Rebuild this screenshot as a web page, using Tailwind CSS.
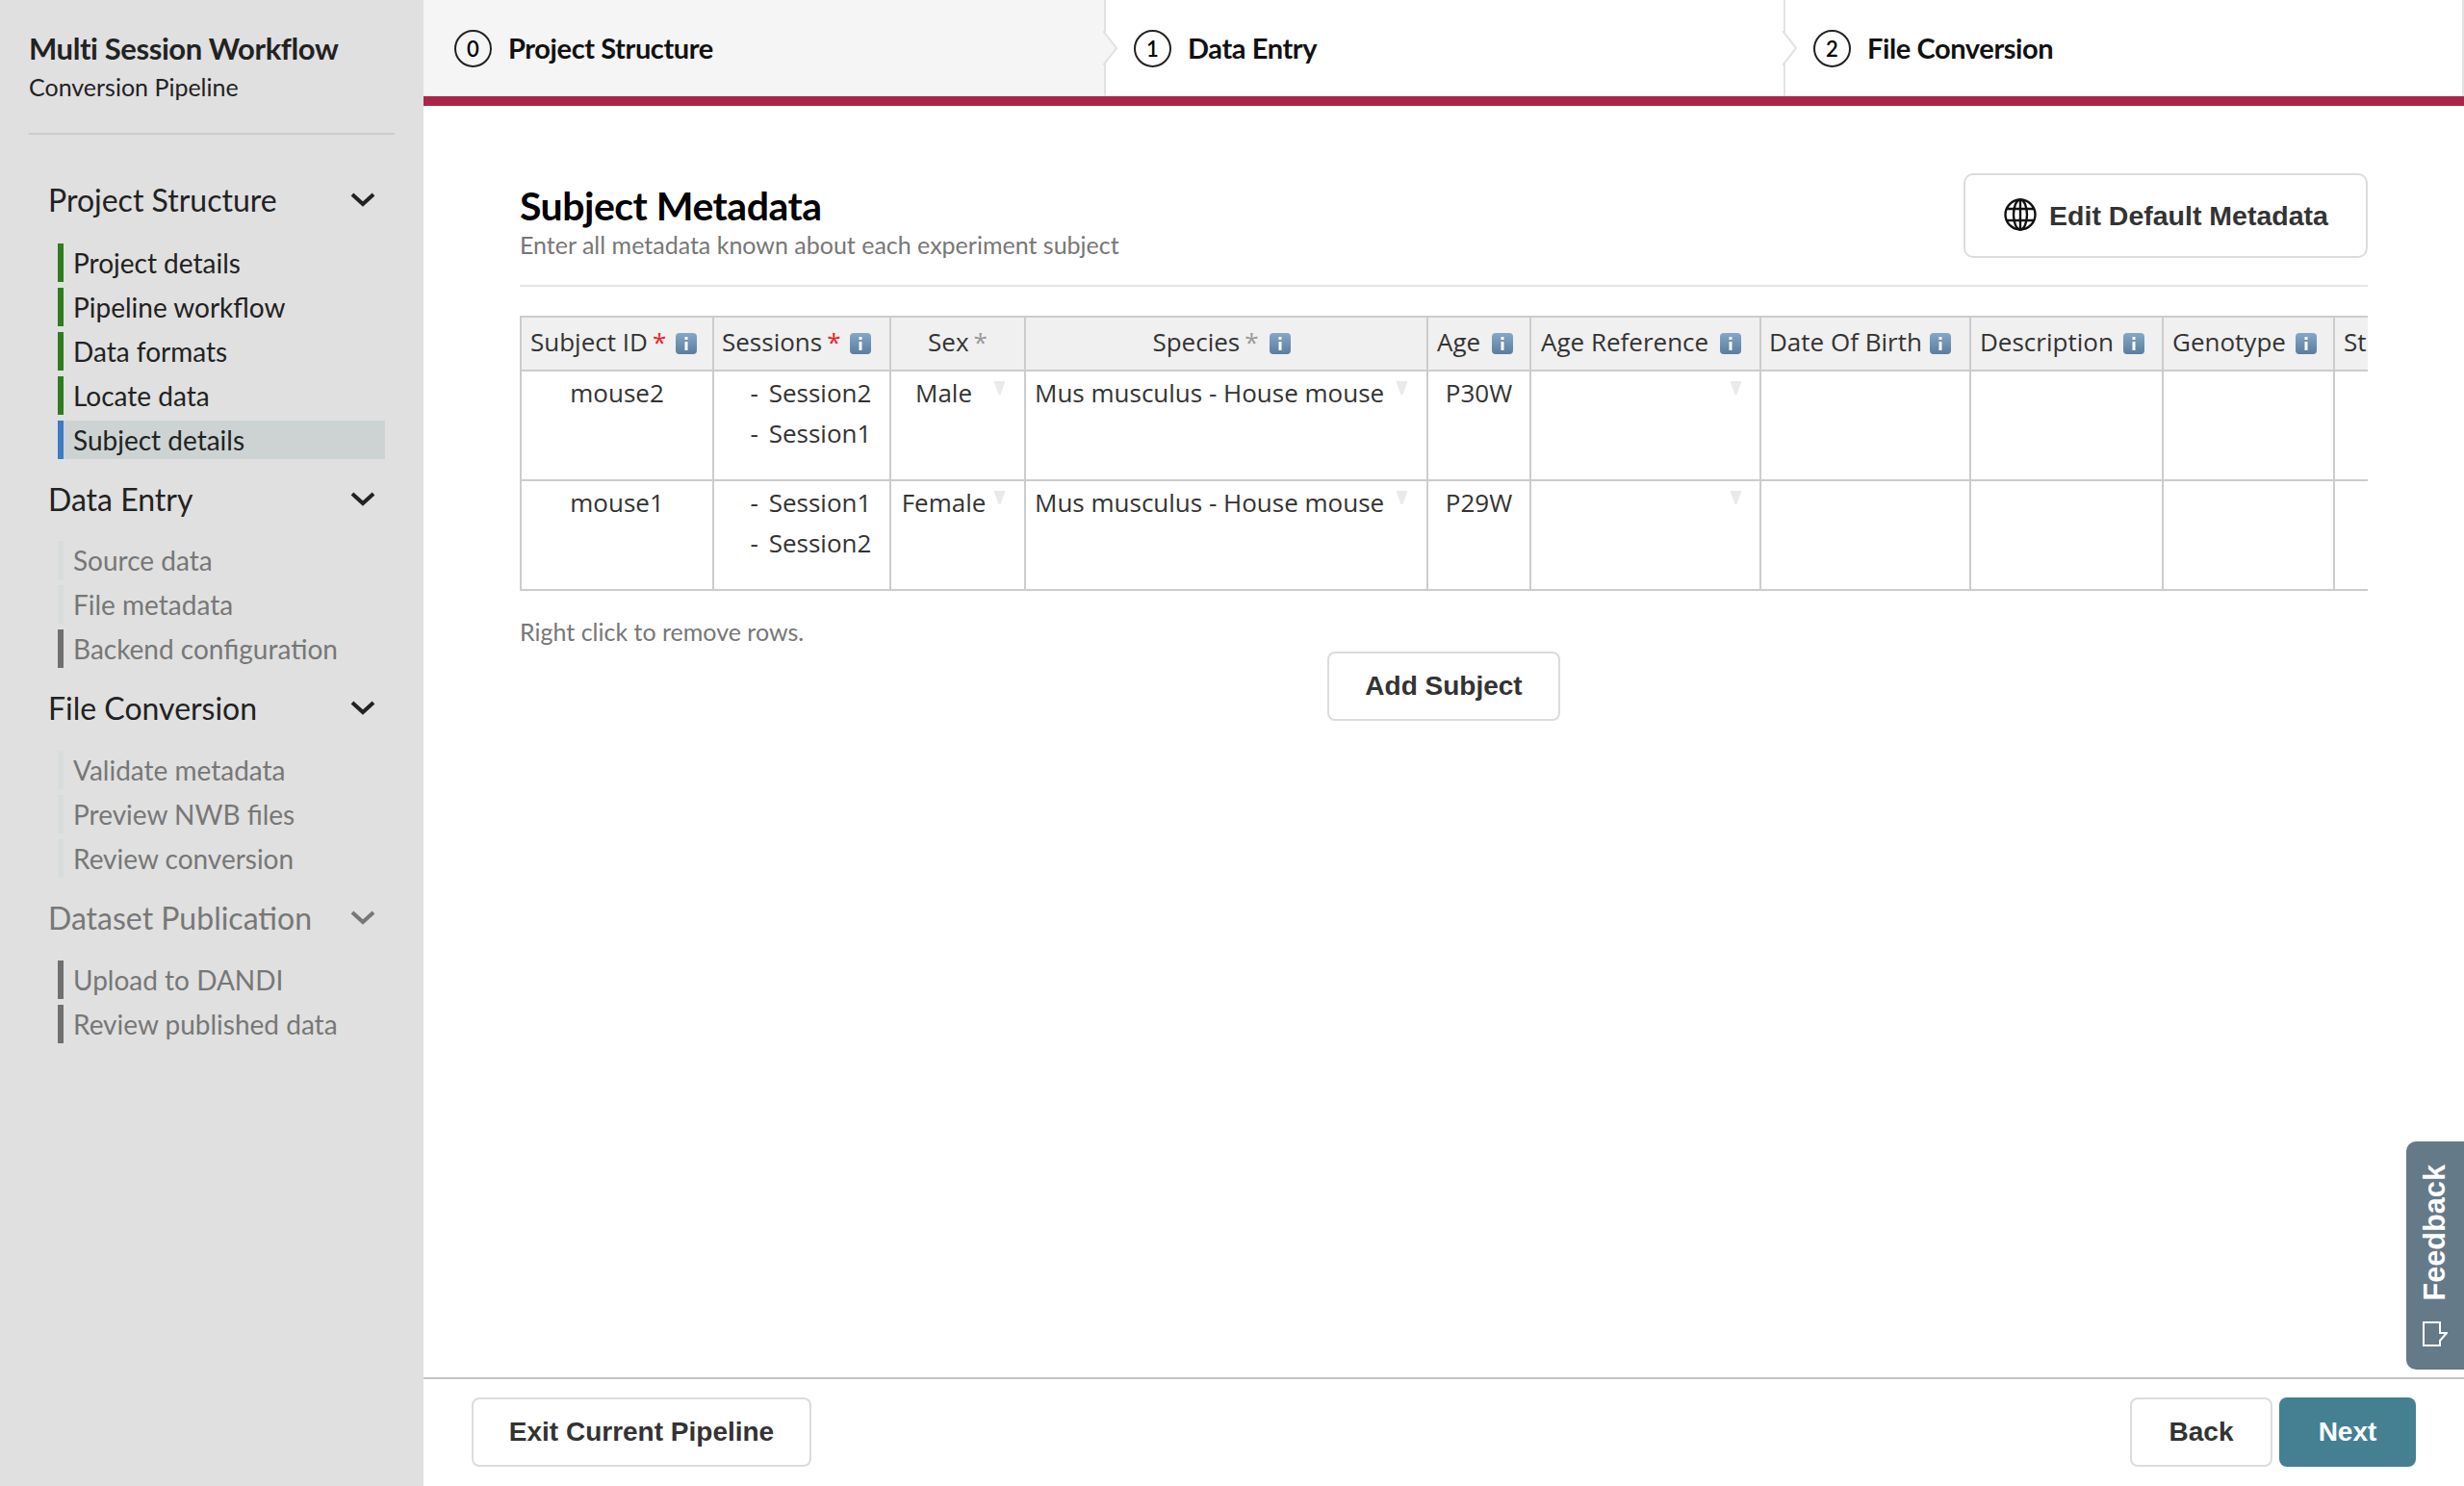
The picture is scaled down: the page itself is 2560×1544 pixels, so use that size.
<!DOCTYPE html>
<html lang="en">
<head>
    <meta charset="UTF-8">
    <title>NWB GUIDE - Subject Metadata</title>
    <script src="https://cdn.jsdelivr.net/npm/@tailwindcss/browser@4"></script>
</head>
<body class="bg-white text-black [font-family:Lato,sans-serif]">
    <div class="flex h-[1544px] w-[2560px] overflow-hidden">
        <!-- Sidebar -->
        <aside class="w-[440px] shrink-0 bg-[#e0e0e0] px-[30px]">
            <div class="pt-[31px] text-[31px] leading-[38px] font-bold text-[#222] tracking-[-0.4px]">Multi Session Workflow</div>
            <div class="mt-[5px] text-[25px] leading-[32px] text-[#222]">Conversion Pipeline</div>
            <div class="mt-[32px] h-[2px] w-[380px] bg-[#cccccc]"></div>

            <nav class="mt-[44px]">
                <div class="flex h-[48px] items-center justify-between pl-[20px] pr-[20px] text-[32px] text-[#222]">
                    <span>Project Structure</span>
                    <svg class="-mt-[3px] h-[16px] w-[26px]" viewBox="0 0 26 16" fill="none" stroke="#222" stroke-width="4"><path d="M2 3l11 10L24 3"/></svg>
                </div>
                <ul class="mt-[21px] pl-[30px] text-[28px] text-[#222]">
                    <li class="mb-[6px] flex h-[40px] items-center border-l-[6px] border-[#2e7d1e] pl-[10px]">Project details</li>
                    <li class="mb-[6px] flex h-[40px] items-center border-l-[6px] border-[#2e7d1e] pl-[10px]">Pipeline workflow</li>
                    <li class="mb-[6px] flex h-[40px] items-center border-l-[6px] border-[#2e7d1e] pl-[10px]">Data formats</li>
                    <li class="mb-[6px] flex h-[40px] items-center border-l-[6px] border-[#2e7d1e] pl-[10px]">Locate data</li>
                    <li class="flex h-[40px] w-[340px] items-center border-l-[6px] border-[#3b7cc4] bg-[#cdd3d3] pl-[10px]">Subject details</li>
                </ul>

                <div class="mt-[18px] flex h-[48px] items-center justify-between pl-[20px] pr-[20px] text-[32px] text-[#222]">
                    <span>Data Entry</span>
                    <svg class="-mt-[3px] h-[16px] w-[26px]" viewBox="0 0 26 16" fill="none" stroke="#222" stroke-width="4"><path d="M2 3l11 10L24 3"/></svg>
                </div>
                <ul class="mt-[19px] pl-[30px] text-[28px] text-[#777]">
                    <li class="mb-[6px] flex h-[40px] items-center border-l-[6px] border-[#d8dcdc] pl-[10px]">Source data</li>
                    <li class="mb-[6px] flex h-[40px] items-center border-l-[6px] border-[#d8dcdc] pl-[10px]">File metadata</li>
                    <li class="flex h-[40px] items-center border-l-[6px] border-[#707070] pl-[10px]">Backend configuration</li>
                </ul>

                <div class="mt-[18px] flex h-[48px] items-center justify-between pl-[20px] pr-[20px] text-[32px] text-[#222]">
                    <span>File Conversion</span>
                    <svg class="-mt-[3px] h-[16px] w-[26px]" viewBox="0 0 26 16" fill="none" stroke="#222" stroke-width="4"><path d="M2 3l11 10L24 3"/></svg>
                </div>
                <ul class="mt-[20px] pl-[30px] text-[28px] text-[#777]">
                    <li class="mb-[6px] flex h-[40px] items-center border-l-[6px] border-[#d8dcdc] pl-[10px]">Validate metadata</li>
                    <li class="mb-[6px] flex h-[40px] items-center border-l-[6px] border-[#d8dcdc] pl-[10px]">Preview NWB files</li>
                    <li class="flex h-[40px] items-center border-l-[6px] border-[#d8dcdc] pl-[10px]">Review conversion</li>
                </ul>

                <div class="mt-[18px] flex h-[48px] items-center justify-between pl-[20px] pr-[20px] text-[32px] text-[#777]">
                    <span>Dataset Publication</span>
                    <svg class="-mt-[3px] h-[16px] w-[26px]" viewBox="0 0 26 16" fill="none" stroke="#777" stroke-width="4"><path d="M2 3l11 10L24 3"/></svg>
                </div>
                <ul class="mt-[20px] pl-[30px] text-[28px] text-[#777]">
                    <li class="mb-[6px] flex h-[40px] items-center border-l-[6px] border-[#707070] pl-[10px]">Upload to DANDI</li>
                    <li class="flex h-[40px] items-center border-l-[6px] border-[#707070] pl-[10px]">Review published data</li>
                </ul>
            </nav>
        </aside>

        <main class="flex min-w-0 flex-1 flex-col">
            <!-- Steps -->
            <header class="flex h-[110px] shrink-0 border-b-[10px] border-[#a9264a]">
                <div class="relative flex w-[707px] items-center bg-[#f5f5f5] pl-[32px]">
                    <span class="flex h-[39px] w-[39px] items-center justify-center rounded-full border-2 border-[#222] text-[22px] font-semibold">0</span>
                    <span class="ml-[17px] text-[29px] font-bold tracking-[-0.4px] text-[#111]">Project Structure</span>
                    <svg class="absolute -right-[15px] top-[32px] z-10 h-[36px] w-[16px]" viewBox="0 0 16 36"><path d="M0 0L14 18L0 36Z" fill="#f5f5f5"/><path d="M0 0L14 18L0 36" fill="none" stroke="#e2e2e2" stroke-width="2"/></svg>
                </div>
                <div class="relative flex w-[706px] items-center border-l-2 border-[#e2e2e2] pl-[29px]">
                    <span class="flex h-[39px] w-[39px] items-center justify-center rounded-full border-2 border-[#222] text-[22px] font-semibold">1</span>
                    <span class="ml-[17px] text-[29px] font-bold tracking-[-0.4px] text-[#111]">Data Entry</span>
                    <svg class="absolute -right-[15px] top-[32px] z-10 h-[36px] w-[16px]" viewBox="0 0 16 36"><path d="M0 0L14 18L0 36Z" fill="#fff"/><path d="M0 0L14 18L0 36" fill="none" stroke="#e2e2e2" stroke-width="2"/></svg>
                </div>
                <div class="flex flex-1 items-center border-l-2 border-r-2 border-[#e2e2e2] pl-[29px]">
                    <span class="flex h-[39px] w-[39px] items-center justify-center rounded-full border-2 border-[#222] text-[22px] font-semibold">2</span>
                    <span class="ml-[17px] text-[29px] font-bold tracking-[-0.4px] text-[#111]">File Conversion</span>
                </div>
            </header>

            <!-- Page content -->
            <section class="min-h-0 flex-1 px-[100px] pt-[70px]">
                <div class="flex h-[118px] items-start justify-between border-b-2 border-[#e5e5e5]">
                    <div>
                        <h1 class="mt-[9px] text-[41px] leading-[50px] font-bold tracking-[-0.5px] text-black">Subject Metadata</h1>
                        <p class="text-[25px] leading-[30px] text-[#777]">Enter all metadata known about each experiment subject</p>
                    </div>
                    <button class="flex h-[88px] w-[420px] items-center justify-center gap-[12px] rounded-[10px] border-2 border-[#dcdcdc] text-[28.5px] font-bold text-[#333] [font-family:'Liberation_Sans',sans-serif]">
                        <svg class="-mt-[2px] h-[36px] w-[36px]" viewBox="0 0 36 36" fill="none" stroke="#111" stroke-width="2.4"><circle cx="18" cy="18" r="15.5"/><ellipse cx="18" cy="18" rx="7" ry="15.5"/><path d="M18 2.5v31M4 12h28M4 24h28"/></svg>
                        Edit Default Metadata
                    </button>
                </div>

                <div class="mt-[30px] w-[1920px] overflow-hidden">
                    <table class="w-[2100px] table-fixed border-collapse text-[26px] text-[#333] [font-family:'Open_Sans',sans-serif]">
                        <colgroup>
                            <col class="w-[200px]">
                            <col class="w-[184px]">
                            <col class="w-[140px]">
                            <col class="w-[418px]">
                            <col class="w-[107px]">
                            <col class="w-[239px]">
                            <col class="w-[218px]">
                            <col class="w-[200px]">
                            <col class="w-[178px]">
                            <col class="w-[216px]">
                        </colgroup>
                        <thead>
                            <tr class="h-[56px] bg-[#f0f0f0]">
                                <th class="border-2 border-[#cccccc] px-[9px] pb-[3px] text-left font-normal whitespace-nowrap">Subject ID<span class="ml-[5px] text-[#ee2222]">*</span><svg class="ml-[10px] inline-block h-[22px] w-[22px] rounded-[4px] bg-linear-to-b from-[#86a7c7] to-[#5a7d9f] align-[-3px]" viewBox="0 0 22 22"><rect x="9.5" y="9" width="3" height="9" fill="#fff"/><rect x="9.5" y="4" width="3" height="3" fill="#fff"/></svg></th>
                                <th class="border-2 border-[#cccccc] pl-[8px] pr-[9px] pb-[3px] text-left font-normal whitespace-nowrap">Sessions<span class="ml-[5px] text-[#ee2222]">*</span><svg class="ml-[9px] inline-block h-[22px] w-[22px] rounded-[4px] bg-linear-to-b from-[#86a7c7] to-[#5a7d9f] align-[-3px]" viewBox="0 0 22 22"><rect x="9.5" y="9" width="3" height="9" fill="#fff"/><rect x="9.5" y="4" width="3" height="3" fill="#fff"/></svg></th>
                                <th class="border-2 border-[#cccccc] px-[9px] pb-[3px] text-center font-normal whitespace-nowrap">Sex<span class="ml-[5px] text-[#999]">*</span></th>
                                <th class="border-2 border-[#cccccc] pl-[9px] pr-[19px] pb-[3px] text-center font-normal whitespace-nowrap">Species<span class="ml-[5px] text-[#999]">*</span><svg class="ml-[11px] inline-block h-[22px] w-[22px] rounded-[4px] bg-linear-to-b from-[#86a7c7] to-[#5a7d9f] align-[-3px]" viewBox="0 0 22 22"><rect x="9.5" y="9" width="3" height="9" fill="#fff"/><rect x="9.5" y="4" width="3" height="3" fill="#fff"/></svg></th>
                                <th class="border-2 border-[#cccccc] px-[9px] pb-[3px] text-left font-normal whitespace-nowrap">Age<svg class="ml-[12px] inline-block h-[22px] w-[22px] rounded-[4px] bg-linear-to-b from-[#86a7c7] to-[#5a7d9f] align-[-3px]" viewBox="0 0 22 22"><rect x="9.5" y="9" width="3" height="9" fill="#fff"/><rect x="9.5" y="4" width="3" height="3" fill="#fff"/></svg></th>
                                <th class="border-2 border-[#cccccc] pl-[10px] pr-[9px] pb-[3px] text-left font-normal whitespace-nowrap">Age Reference<svg class="ml-[12px] inline-block h-[22px] w-[22px] rounded-[4px] bg-linear-to-b from-[#86a7c7] to-[#5a7d9f] align-[-3px]" viewBox="0 0 22 22"><rect x="9.5" y="9" width="3" height="9" fill="#fff"/><rect x="9.5" y="4" width="3" height="3" fill="#fff"/></svg></th>
                                <th class="border-2 border-[#cccccc] pl-[8px] pr-[9px] pb-[3px] text-left font-normal whitespace-nowrap">Date Of Birth<svg class="ml-[8px] inline-block h-[22px] w-[22px] rounded-[4px] bg-linear-to-b from-[#86a7c7] to-[#5a7d9f] align-[-3px]" viewBox="0 0 22 22"><rect x="9.5" y="9" width="3" height="9" fill="#fff"/><rect x="9.5" y="4" width="3" height="3" fill="#fff"/></svg></th>
                                <th class="border-2 border-[#cccccc] px-[9px] pb-[3px] text-left font-normal whitespace-nowrap">Description<svg class="ml-[10px] inline-block h-[22px] w-[22px] rounded-[4px] bg-linear-to-b from-[#86a7c7] to-[#5a7d9f] align-[-3px]" viewBox="0 0 22 22"><rect x="9.5" y="9" width="3" height="9" fill="#fff"/><rect x="9.5" y="4" width="3" height="3" fill="#fff"/></svg></th>
                                <th class="border-2 border-[#cccccc] px-[9px] pb-[3px] text-left font-normal whitespace-nowrap">Genotype<svg class="ml-[10px] inline-block h-[22px] w-[22px] rounded-[4px] bg-linear-to-b from-[#86a7c7] to-[#5a7d9f] align-[-3px]" viewBox="0 0 22 22"><rect x="9.5" y="9" width="3" height="9" fill="#fff"/><rect x="9.5" y="4" width="3" height="3" fill="#fff"/></svg></th>
                                <th class="border-2 border-[#cccccc] px-[9px] pb-[3px] text-left font-normal whitespace-nowrap">Strain</th>
                            </tr>
                        </thead>
                        <tbody>
                            <tr class="h-[114px]">
                                <td class="border-2 border-[#cccccc] px-[9px] pt-[4px] align-top text-center leading-[36px]">mouse2</td>
                                <td class="border-2 border-[#cccccc] pl-[28px] pr-[9px] pt-[4px] align-top text-center leading-[42px] [word-spacing:4px]"><div class="-mt-[3px]">- Session2</div><div>- Session1</div></td>
                                <td class="border-2 border-[#cccccc] px-[9px] pt-[4px] align-top leading-[36px]"><div class="flex items-start"><span class="flex-1 pr-[6px] text-center">Male</span><svg class="mr-[10px] mt-[6px] h-[14px] w-[13px] shrink-0" viewBox="0 0 12 14"><path d="M0 0H12L7 14H5Z" fill="#eaeaea"/></svg></div></td>
                                <td class="border-2 border-[#cccccc] px-[9px] pt-[4px] align-top leading-[36px]"><div class="flex items-start whitespace-nowrap"><span class="flex-1">Mus musculus - House mouse</span><svg class="mr-[10px] mt-[6px] h-[14px] w-[13px] shrink-0" viewBox="0 0 12 14"><path d="M0 0H12L7 14H5Z" fill="#eaeaea"/></svg></div></td>
                                <td class="border-2 border-[#cccccc] px-[9px] pt-[4px] align-top text-center leading-[36px]">P30W</td>
                                <td class="border-2 border-[#cccccc] px-[18px] pt-[4px] align-top leading-[36px]"><div class="flex justify-end"><svg class="mt-[6px] h-[14px] w-[13px]" viewBox="0 0 12 14"><path d="M0 0H12L7 14H5Z" fill="#eaeaea"/></svg></div></td>
                                <td class="border-2 border-[#cccccc]"></td>
                                <td class="border-2 border-[#cccccc]"></td>
                                <td class="border-2 border-[#cccccc]"></td>
                                <td class="border-2 border-[#cccccc]"></td>
                            </tr>
                            <tr class="h-[114px]">
                                <td class="border-2 border-[#cccccc] px-[9px] pt-[4px] align-top text-center leading-[36px]">mouse1</td>
                                <td class="border-2 border-[#cccccc] pl-[28px] pr-[9px] pt-[4px] align-top text-center leading-[42px] [word-spacing:4px]"><div class="-mt-[3px]">- Session1</div><div>- Session2</div></td>
                                <td class="border-2 border-[#cccccc] px-[9px] pt-[4px] align-top leading-[36px]"><div class="flex items-start"><span class="flex-1 pr-[6px] text-center">Female</span><svg class="mr-[10px] mt-[6px] h-[14px] w-[13px] shrink-0" viewBox="0 0 12 14"><path d="M0 0H12L7 14H5Z" fill="#eaeaea"/></svg></div></td>
                                <td class="border-2 border-[#cccccc] px-[9px] pt-[4px] align-top leading-[36px]"><div class="flex items-start whitespace-nowrap"><span class="flex-1">Mus musculus - House mouse</span><svg class="mr-[10px] mt-[6px] h-[14px] w-[13px] shrink-0" viewBox="0 0 12 14"><path d="M0 0H12L7 14H5Z" fill="#eaeaea"/></svg></div></td>
                                <td class="border-2 border-[#cccccc] px-[9px] pt-[4px] align-top text-center leading-[36px]">P29W</td>
                                <td class="border-2 border-[#cccccc] px-[18px] pt-[4px] align-top leading-[36px]"><div class="flex justify-end"><svg class="mt-[6px] h-[14px] w-[13px]" viewBox="0 0 12 14"><path d="M0 0H12L7 14H5Z" fill="#eaeaea"/></svg></div></td>
                                <td class="border-2 border-[#cccccc]"></td>
                                <td class="border-2 border-[#cccccc]"></td>
                                <td class="border-2 border-[#cccccc]"></td>
                                <td class="border-2 border-[#cccccc]"></td>
                            </tr>
                        </tbody>
                    </table>
                </div>

                <p class="mt-[26px] text-[25px] leading-[32px] text-[#777]">Right click to remove rows.</p>
                <div class="mt-[5px] flex justify-center">
                    <button class="h-[72px] w-[242px] rounded-[8px] border-2 border-[#dcdcdc] text-[28px] font-bold text-[#333] [font-family:'Liberation_Sans',sans-serif]">Add Subject</button>
                </div>
            </section>

            <!-- Footer nav -->
            <footer class="flex h-[113px] shrink-0 items-start justify-between border-t-2 border-[#c4c4c4] pl-[50px] pr-[50px] pt-[19px] text-[28px] font-bold [font-family:'Liberation_Sans',sans-serif]">
                <button class="h-[72px] w-[353px] rounded-[8px] border-2 border-[#dcdcdc] text-[#333]">Exit Current Pipeline</button>
                <div class="flex gap-[7px]">
                    <button class="h-[72px] w-[148px] rounded-[8px] border-2 border-[#dcdcdc] text-[#333]">Back</button>
                    <button class="h-[72px] w-[142px] rounded-[8px] bg-[#457f92] text-white">Next</button>
                </div>
            </footer>
        </main>
    </div>

    <!-- Feedback tab -->
    <div class="fixed right-0 top-[1186px] flex h-[237px] w-[60px] flex-col items-center justify-between rounded-l-[10px] bg-[#657a88] pb-[24px] pt-[24px] text-white">
        <span class="rotate-180 text-[30.7px] leading-[30px] font-bold [font-family:'Liberation_Sans',sans-serif] [writing-mode:vertical-rl]">Feedback</span>
        <svg class="h-[26px] w-[26px]" viewBox="0 0 26 26" fill="none" stroke="#fff" stroke-width="2"><path d="M1 1h17v11h7l-7 8v5H1z"/></svg>
    </div>
</body>
</html>
